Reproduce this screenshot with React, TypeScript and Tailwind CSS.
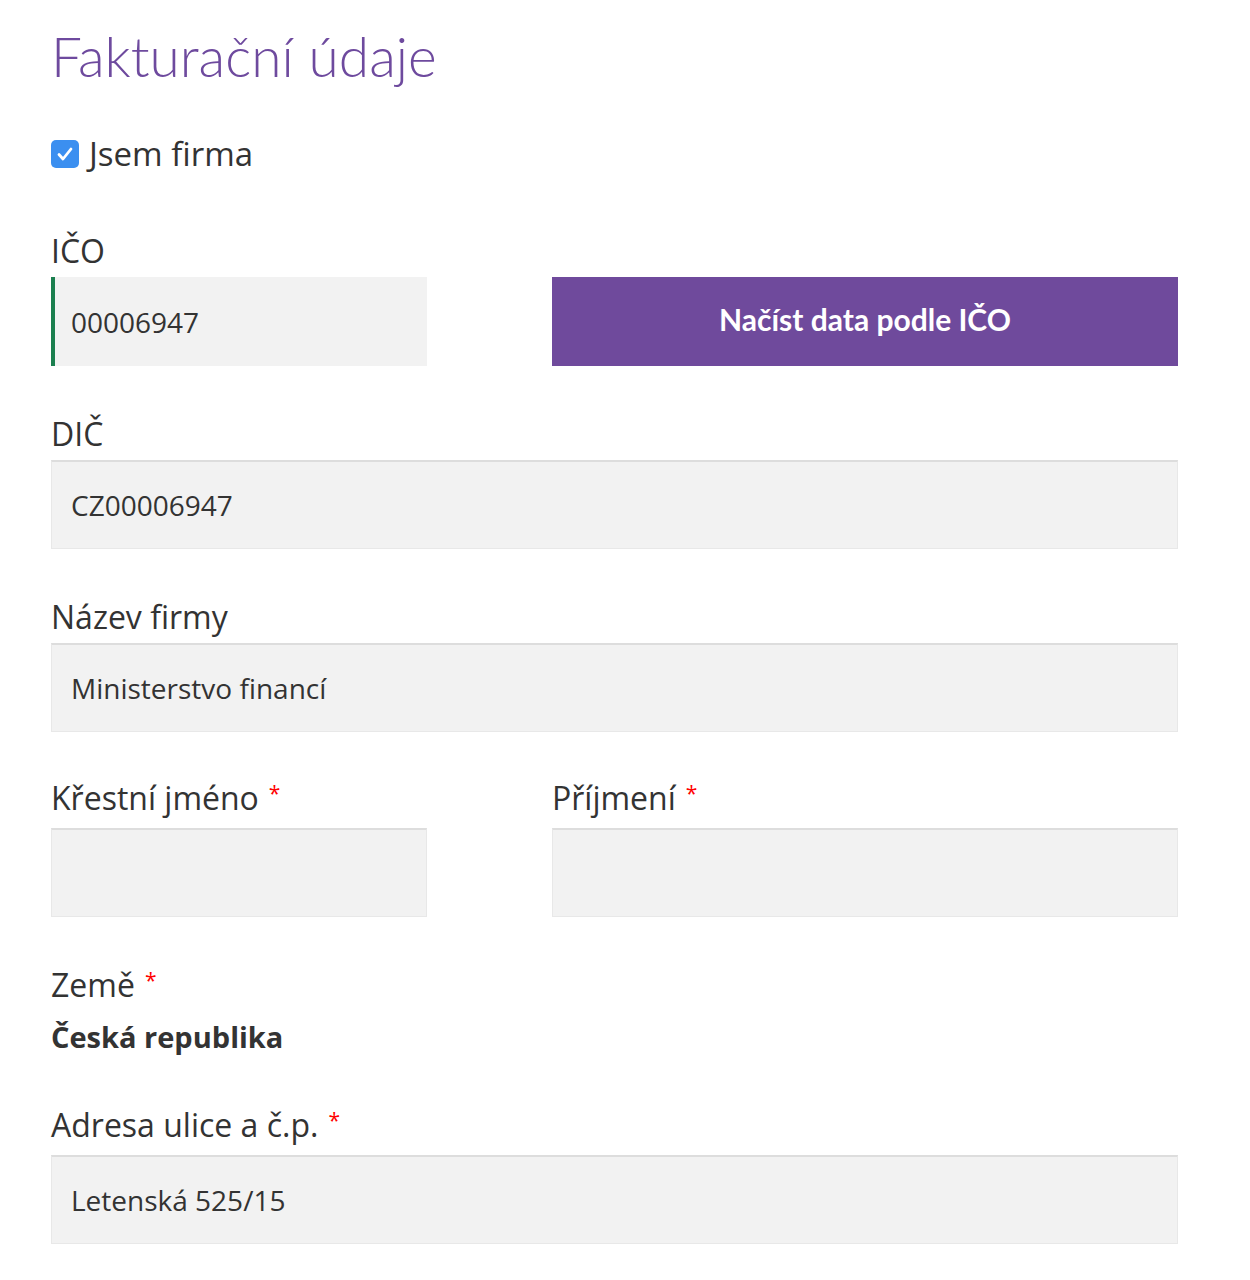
import React, { useState } from 'react';

const labelCls = "block text-[32px] leading-[40px] text-[#333] mb-[6px]";
const inputCls =
  "w-full h-[89px] bg-[#f2f2f2] border border-[#e8e8e8] border-t-2 border-t-[#dddddd] px-[19px] text-[28px] text-[#333] outline-none";

function Req() {
  return <span className="relative -top-[9px] ml-[10px] text-[21px] text-[#ff0000]">*</span>;
}

function Field({ label, value, required }: { label: string; value?: string; required?: boolean }) {
  return (
    <div>
      <label className={labelCls}>
        {label}
        {required && <Req />}
      </label>
      <input className={inputCls} defaultValue={value} style={{ fontFamily: '"Open Sans", sans-serif' }} />
    </div>
  );
}

export default function App() {
  const [isCompany, setIsCompany] = useState(true);

  return (
    <div className="min-h-[1280px] bg-white pl-[51px] pr-[72px] pt-[21px]" style={{ fontFamily: '"Open Sans", "Noto Sans", sans-serif' }}>
      <h1 className="text-[55px] leading-[70px] font-light text-[#6e4a9e]" style={{ fontFamily: 'Lato, sans-serif' }}>
        Fakturační údaje
      </h1>

      {/* checkbox */}
      <label className="mt-[43px] flex items-center gap-[10px] cursor-pointer" onClick={() => setIsCompany(!isCompany)}>
        <span className="w-[28px] h-[28px] rounded-[5px] bg-[#3b8ff0] flex items-center justify-center">
          {isCompany && (
            <svg width="22" height="22" viewBox="0 0 22 22" fill="none">
              <path d="M5 11.5l4 4.5 8-10" stroke="white" strokeWidth="2.8" strokeLinecap="round" strokeLinejoin="round" />
            </svg>
          )}
        </span>
        <span className="text-[33px] leading-[40px] text-[#333]">Jsem firma</span>
      </label>

      <div className="mt-[57px] flex flex-col gap-[48px]">
        {/* IČO row */}
        <div>
          <label className={labelCls}>IČO</label>
          <div className="grid grid-cols-[376px_1fr] gap-x-[125px]">
            <input
              className="w-full h-[89px] bg-[#f2f2f2] border-l-[4px] border-l-[#1b7f4f] px-[16px] text-[28px] text-[#333] outline-none"
              defaultValue="00006947"
            />
            <button
              className="h-[89px] bg-[#6f4a9c] text-white text-[30px] font-bold pb-[4px]"
              style={{ fontFamily: 'Lato, sans-serif' }}
            >
              Načíst data podle IČO
            </button>
          </div>
        </div>

        <Field label="DIČ" value="CZ00006947" />
        <Field label="Název firmy" value="Ministerstvo financí" />

        <div className="grid grid-cols-[376px_1fr] gap-x-[125px] -mt-[2px]">
          <Field label="Křestní jméno" required />
          <Field label="Příjmení" required />
        </div>

        <div>
          <label className="block text-[32px] leading-[40px] text-[#333]">
            Země
            <Req />
          </label>
          <div className="mt-[8px] text-[29px] leading-[40px] font-bold text-[#333]">Česká republika</div>
        </div>

        <Field label="Adresa ulice a č.p." value="Letenská 525/15" required />
      </div>
    </div>
  );
}
